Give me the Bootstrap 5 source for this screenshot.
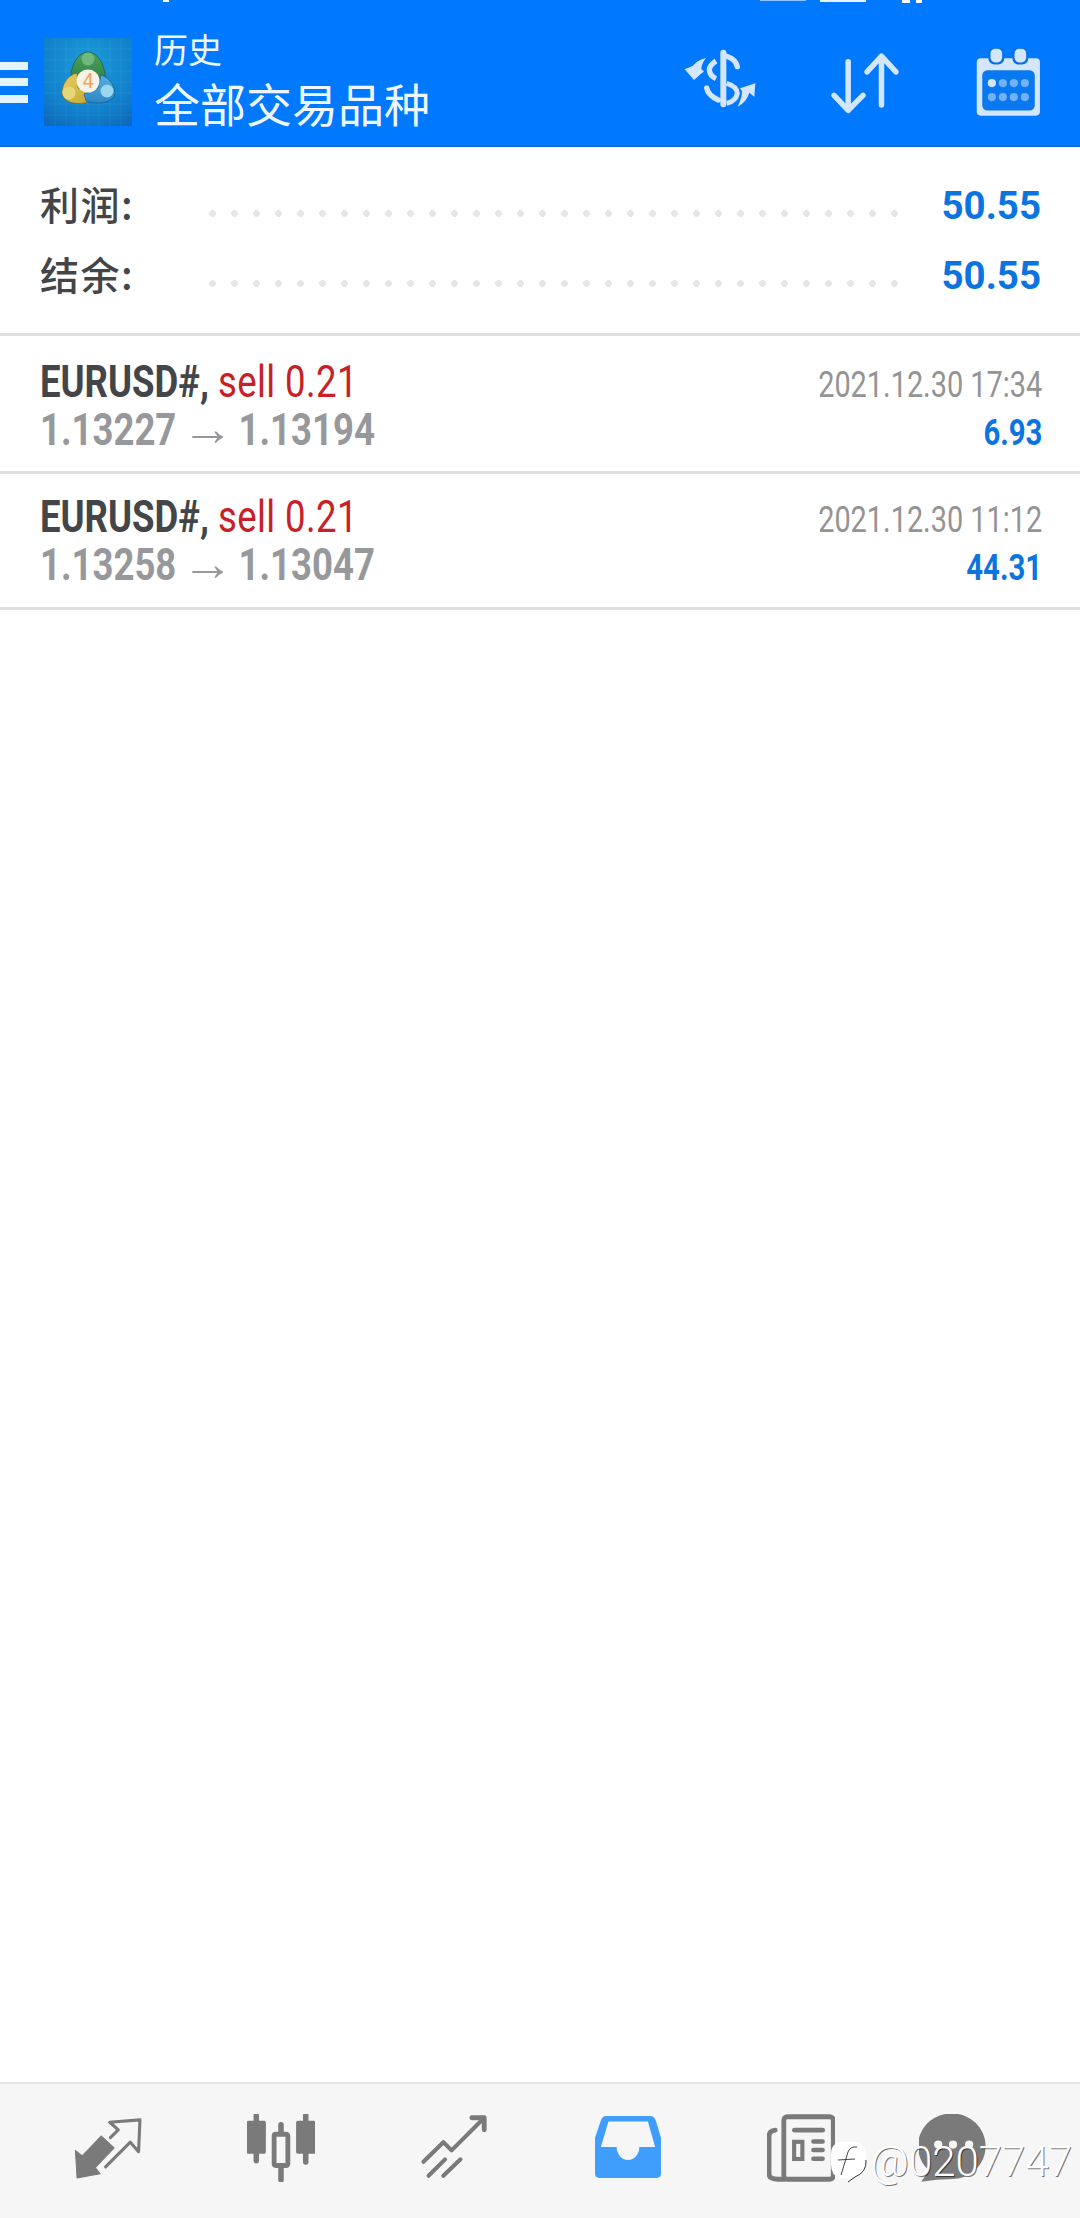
<!DOCTYPE html>
<html lang="zh">
<head>
  <meta charset="UTF-8" />
  <meta name="viewport" content="width=device-width, initial-scale=1.0"/>
  <title>历史</title>
  <link href="https://cdn.jsdelivr.net/npm/bootstrap@5.3.0/dist/css/bootstrap.min.css" rel="stylesheet"/>
  <style>
    body {
      background-color: #fff;
      font-family: Roboto, "Noto Sans CJK SC", sans-serif;
      height: 2218px;
      overflow: hidden;
    }
    .top-bar {
      background-color: #0079fe;
      height: 147px;
      padding-top: 18px;
      border-bottom: 1px solid #0a6ad0;
      color: #eef7ff;
      font-family: "Noto Sans CJK SC", sans-serif;
    }
    .status-bits { left: 0; top: 0; }
    .burger { width: 28px; margin-right: 16px; }
    .burger span { display: block; height: 8px; background-color: #e4f4ff; margin-bottom: 8.5px; }
    .burger span:last-child { margin-bottom: 0; }
    .app-logo { width: 88px; height: 88px; margin-right: 22px; }
    .title-box { margin-bottom: 6px; }
    .title-small { font-size: 34px; line-height: 38px; }
    .title-big { font-size: 46px; line-height: 54px; margin-top: 7px; }
    .head-ico-a { margin-right: 67px; margin-bottom: 2px; }
    .head-ico-b { margin-right: 77px; margin-top: 5px; }
    .head-ico-c { margin-right: 40px; }

    .summary { height: 189px; padding: 37px 39px 0 40px; border-bottom: 3px solid #e1e1e1; }
    .sum-row { height: 70px; }
    .sum-label {
      width: 169px;
      font-family: "Noto Sans CJK SC", sans-serif;
      font-size: 39px;
      font-weight: 500;
      letter-spacing: 1.5px;
      color: #444548;
      line-height: 1;
    }
    .sum-dots {
      height: 7px;
      margin-top: 26px;
      background-image: radial-gradient(circle at 3.5px 3.5px, #e6e6e6 3.2px, transparent 3.6px);
      background-size: 22px 7px;
      background-repeat: repeat-x;
    }
    .sum-value { width: 142px; text-align: right; font-size: 38.5px; font-weight: 700; color: #0b74de; line-height: 1; margin-top: 3px; }

    .deal-row { height: 138px; padding: 22px 38px 0 40px; border-bottom: 3px solid #e1e1e1; }
    .deal-row + .deal-row { height: 136px; padding-top: 19px; }
    .squeeze { display: inline-block; white-space: nowrap; transform: scaleX(.83); transform-origin: left center; }
    .squeeze-end { display: inline-block; white-space: nowrap; transform: scaleX(.78); transform-origin: right center; }
    .deal-line { font-size: 44px; line-height: 48px; height: 48px; }
    .deal-name { font-weight: 700; color: #444548; }
    .deal-sell { color: #c62127; letter-spacing: .5px; }
    .deal-price { font-weight: 700; color: #97989b; }
    .deal-arrow {
      display: inline-block;
      font-family: "Liberation Sans", sans-serif;
      font-weight: 400;
      font-size: 48px;
      line-height: 40px;
      margin: 0 13.5px;
      transform: scaleX(1.3);
    }
    .deal-date { font-size: 37px; line-height: 48px; height: 48px; color: #949494; padding-top: 3px; }
    .deal-profit { font-size: 36px; line-height: 48px; height: 48px; font-weight: 700; color: #0b74de; padding-top: 3px; }
    .deal-profit .squeeze-end { transform: scaleX(.814); }

    .bottom-nav {
      height: 136px;
      background-color: #f6f6f6;
      border-top: 2px solid #e4e4e4;
      padding: 0 0 6px 21px;
    }
    .nav-cell { width: 173.4px; }
    .nav-cell-last { padding-right: 44px; }
    .mark-zh { right: 8px; top: 2140px; color: #fff; font-family: Roboto, sans-serif; font-weight: 300; font-size: 42px; line-height: 44px; text-shadow: 1px 1px 0 rgba(0,0,0,.55); }
  </style>
</head>
<body class="d-flex flex-column position-relative">

  <header class="top-bar d-flex align-items-center position-relative">
    <svg class="status-bits position-absolute" width="1080" height="4" viewBox="0 0 1080 4">
      <rect x="163" y="0" width="6" height="2" fill="#fff"/>
      <rect x="760" y="0" width="46" height="1" fill="#8ec4ff"/>
      <rect x="820" y="0" width="46" height="2" fill="#e8f4ff"/>
      <rect x="902" y="0" width="8" height="3" fill="#fff"/>
      <rect x="916" y="0" width="6" height="3" fill="#fff"/>
    </svg>
    <div class="burger"><span></span><span></span><span></span></div>
    <svg class="app-logo flex-shrink-0" viewBox="0 0 88 88">
      <defs>
        <radialGradient id="tile" cx=".5" cy=".3" r=".85">
          <stop offset="0" stop-color="#1a9ad8"/>
          <stop offset=".65" stop-color="#1180cc"/>
          <stop offset="1" stop-color="#0d66b8"/>
        </radialGradient>
        <linearGradient id="leafG" x1="0" y1="0" x2="0" y2="1"><stop offset="0" stop-color="#4f9f5e"/><stop offset="1" stop-color="#2d7f45"/></linearGradient>
        <linearGradient id="leafY" x1="0" y1="0" x2="1" y2="1"><stop offset="0" stop-color="#e3d06a"/><stop offset="1" stop-color="#c6a92f"/></linearGradient>
        <linearGradient id="leafB" x1="0" y1="0" x2="0" y2="1"><stop offset="0" stop-color="#58aee0"/><stop offset="1" stop-color="#2e86c4"/></linearGradient>
      </defs>
      <rect width="88" height="88" fill="url(#tile)"/>
      <path d="M11 0V88M22 0V88M33 0V88M44 0V88M55 0V88M66 0V88M77 0V88M0 11H88M0 22H88M0 33H88M0 44H88M0 55H88M0 66H88M0 77H88" stroke="#fff" stroke-opacity=".06" stroke-width="1"/>
      <path d="M44 14C54 14 62 28 61 42L52 46H36L27 42C26 28 34 14 44 14Z" fill="url(#leafG)" stroke="#1c5c38" stroke-width=".7"/>
      <circle cx="44" cy="21" r="6.5" fill="#6fb97e"/>
      <path d="M33 35C24 37 18 46 18 55C19 64 32 68 44 64L46 56L34 50Z" fill="url(#leafY)" stroke="#7a6a18" stroke-width=".7"/>
      <circle cx="25" cy="55" r="6.5" fill="#e4d779"/>
      <path d="M57 37C66 40 71 48 71 56C69 65 54 67 42 63L40 56L54 50Z" fill="url(#leafB)" stroke="#0f5d90" stroke-width=".7"/>
      <circle cx="63" cy="53" r="6.5" fill="#9ad6ee"/>
      <circle cx="44" cy="43" r="11.5" fill="#f8f1e8"/>
      <text x="44" y="50" text-anchor="middle" font-family="Roboto, sans-serif" font-size="20" font-weight="400" fill="#f0a45c">4</text>
    </svg>
    <div class="title-box flex-grow-1">
      <div class="title-small">历史</div>
      <div class="title-big">全部交易品种</div>
    </div>
    <svg class="head-ico-a" width="84" height="70" viewBox="0 0 252 210" fill="none" stroke="#d3e6fb">
      <path d="M130 20V175" stroke-width="18" stroke-linecap="round"/>
      <path d="M138 30Q168 40 172 62" stroke-width="16" stroke-linecap="round"/>
      <path d="M108 45Q88 58 88 72Q90 90 108 98" stroke-width="16"/>
      <path d="M140 112Q172 122 172 142Q168 165 140 172" stroke-width="15"/>
      <path d="M80 126Q84 148 115 162" stroke-width="16" stroke-linecap="round"/>
      <path d="M14 70L38 60Q52 42 78 36Q64 54 64 70L72 76L42 102Z" fill="#d3e6fb" stroke="none"/>
      <path d="M226 112L223 152L208 140Q200 168 173 182Q186 156 186 136L180 127Z" fill="#d3e6fb" stroke="none"/>
    </svg>
    <svg class="head-ico-b" width="68" height="68" viewBox="845 147 198 198" fill="none" stroke="#d3e6fb" stroke-width="16" stroke-linecap="round" stroke-linejoin="round">
      <path d="M895 178V318M854 276L895 320L938 276"/>
      <path d="M992 304V164M950 208L992 162L1034 208"/>
    </svg>
    <svg class="head-ico-c" width="64" height="68" viewBox="1266 140 186 198">
      <rect x="1268" y="170" width="184" height="167" rx="12" fill="#d3e6fb"/>
      <rect x="1302" y="138" width="46" height="50" rx="18" fill="#0a6fe0"/>
      <rect x="1372" y="138" width="46" height="50" rx="18" fill="#0a6fe0"/>
      <rect x="1308" y="142" width="34" height="40" rx="14" fill="#d3e6fb"/>
      <rect x="1378" y="142" width="34" height="40" rx="14" fill="#d3e6fb"/>
      <rect x="1284" y="205" width="153" height="117" rx="15" fill="#0a78f0"/>
      <circle cx="1312" cy="242" r="12" fill="#d3e6fb"/>
      <g fill="#72b2f8">
        <circle cx="1344" cy="242" r="12"/><circle cx="1376" cy="242" r="12"/><circle cx="1408" cy="242" r="12"/>
        <circle cx="1312" cy="283" r="12"/><circle cx="1344" cy="283" r="12"/><circle cx="1376" cy="283" r="12"/><circle cx="1408" cy="283" r="12"/>
      </g>
    </svg>
  </header>

  <section class="summary">
    <div class="sum-row d-flex align-items-start">
      <div class="sum-label">利润:</div>
      <div class="sum-dots flex-grow-1"></div>
      <div class="sum-value">50.55</div>
    </div>
    <div class="sum-row d-flex align-items-start">
      <div class="sum-label">结余:</div>
      <div class="sum-dots flex-grow-1"></div>
      <div class="sum-value">50.55</div>
    </div>
  </section>

  <section>
    <div class="deal-row d-flex justify-content-between">
      <div>
        <div class="deal-line"><span class="squeeze"><span class="deal-name">EURUSD#,</span> <span class="deal-sell">sell 0.21</span></span></div>
        <div class="deal-line"><span class="squeeze deal-price">1.13227<span class="deal-arrow">→</span>1.13194</span></div>
      </div>
      <div class="text-end">
        <div class="deal-date"><span class="squeeze-end">2021.12.30 17:34</span></div>
        <div class="deal-profit"><span class="squeeze-end">6.93</span></div>
      </div>
    </div>
    <div class="deal-row d-flex justify-content-between">
      <div>
        <div class="deal-line"><span class="squeeze"><span class="deal-name">EURUSD#,</span> <span class="deal-sell">sell 0.21</span></span></div>
        <div class="deal-line"><span class="squeeze deal-price">1.13258<span class="deal-arrow">→</span>1.13047</span></div>
      </div>
      <div class="text-end">
        <div class="deal-date"><span class="squeeze-end">2021.12.30 11:12</span></div>
        <div class="deal-profit"><span class="squeeze-end">44.31</span></div>
      </div>
    </div>
  </section>

  <div class="flex-grow-1"></div>

  <nav class="bottom-nav d-flex align-items-center">
    <div class="nav-cell d-flex justify-content-center">
      <svg width="68" height="68" viewBox="216 166 198 198" fill="#7a7a7a">
        <path d="M220 272L240 288L295 230L333 265L278 322L292 340L225 352Z" stroke="#7a7a7a" stroke-width="3" stroke-linejoin="round"/>
        <path d="M322 235L345 212L320 190L408 183L404 276L380 248L308 320" fill="none" stroke="#7a7a7a" stroke-width="9" stroke-linejoin="round" stroke-linecap="round"/>
      </svg>
    </div>
    <div class="nav-cell d-flex justify-content-center">
      <svg width="68" height="68" viewBox="717 166 198 198" fill="none" stroke="#7a7a7a" stroke-linecap="round">
        <path d="M744 170V302M816 197V358M888 170V306" stroke-width="16"/>
        <rect x="716" y="186" width="56" height="96" rx="5" fill="#7a7a7a" stroke="none"/>
        <rect x="860" y="186" width="56" height="96" rx="5" fill="#7a7a7a" stroke="none"/>
        <rect x="796" y="225" width="40" height="91" rx="5" fill="#f6f6f6" stroke-width="14"/>
      </svg>
    </div>
    <div class="nav-cell d-flex justify-content-center">
      <svg width="68" height="68" viewBox="1220 166 198 198" fill="none" stroke="#7a7a7a" stroke-width="12" stroke-linecap="round" stroke-linejoin="round">
        <path d="M1230 305L1288 248L1312 272L1402 182"/>
        <path d="M1371 177H1407V212" stroke-width="14"/>
        <path d="M1245 346L1293 298M1288 346L1338 298"/>
      </svg>
    </div>
    <div class="nav-cell d-flex justify-content-center">
      <svg width="68" height="68" viewBox="155 166 198 198">
        <path fill="#3f9dfb" fill-rule="evenodd" d="M190 172H318Q330 172 335 185L350 235V340Q350 352 338 352H170Q158 352 158 340V235L175 185Q180 172 190 172ZM197 188L175 262H221A33 38 0 0 0 287 262H333L312 188Z"/>
      </svg>
    </div>
    <div class="nav-cell d-flex justify-content-center">
      <svg width="68" height="68" viewBox="658 161 198 198" fill="none" stroke="#7a7a7a" stroke-linecap="round">
        <rect x="707" y="169" width="144" height="182" rx="10" stroke-width="14"/>
        <path d="M682 208Q664 210 664 226V336Q664 351 690 351H710" stroke-width="14"/>
        <path d="M738 208H820" stroke-width="14"/>
        <path d="M793 241H820M793 266H820M793 291H820" stroke-width="13"/>
        <rect x="737" y="242" width="24" height="50" stroke-width="12"/>
      </svg>
    </div>
    <div class="nav-cell nav-cell-last d-flex justify-content-center">
      <svg width="68" height="68" viewBox="1099 161 198 198">
        <path fill="#7a7a7a" d="M1198 160A95 95 0 0 1 1198 350Q1150 350 1105 358Q1125 335 1122 320A95 95 0 0 1 1198 160Z"/>
        <circle cx="1155" cy="250" r="12" fill="#f6f6f6"/>
        <circle cx="1198" cy="250" r="12" fill="#f6f6f6"/>
        <circle cx="1245" cy="250" r="12" fill="#f6f6f6"/>
      </svg>
    </div>
  </nav>

  <div class="mark-zh position-absolute d-flex align-items-center">
    <svg width="36" height="44" viewBox="0 0 36 44" class="me-1">
      <path d="M9 2H26Q35 4 35.5 16V24Q35 34 23 37L17 42L17 38H9Q0 36 0 24V14Q0 4 9 2Z" fill="#fff"/>
      <path d="M26 7Q19 6 17 12L10 35M7 20L24 19" fill="none" stroke="#444" stroke-width="1"/>
      <path d="M35 20Q36 32 24 37L17 42" fill="none" stroke="#333" stroke-width="1"/>
    </svg>
    <span>@0207747</span>
  </div>

</body>
</html>
